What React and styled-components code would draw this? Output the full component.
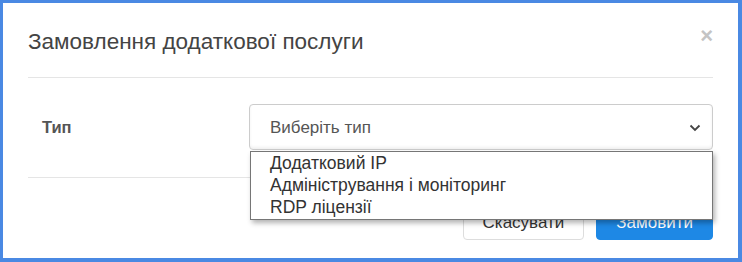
import React from "react"
import styled, { createGlobalStyle } from "styled-components"

const GlobalStyle = createGlobalStyle`
  html, body {
    margin: 0;
    padding: 0;
    background: #ffffff;
  }
  body {
    font-family: "Liberation Sans", Arial, sans-serif;
  }
`

const options = ["Додатковий IP", "Адміністрування і моніторинг", "RDP ліцензії"]

function App() {
  return (
    <>
      <GlobalStyle />
      <Frame>
        <Header>
          <Title>Замовлення додаткової послуги</Title>
          <Close aria-label="close">×</Close>
        </Header>
        <Body>
          <Label>Тип</Label>
          <SelectWrap>
            <Select>
              <span>Виберіть тип</span>
              <svg width="12" height="8" viewBox="0 0 12 8">
                <path d="M1.5 1.5 L6 6 L10.5 1.5" fill="none" stroke="#444" strokeWidth="1.8" />
              </svg>
            </Select>
            <Menu>
              {options.map(o => (
                <Option key={o}>{o}</Option>
              ))}
            </Menu>
          </SelectWrap>
        </Body>
        <Footer>
          <Button>Скасувати</Button>
          <Button primary>Замовити</Button>
        </Footer>
      </Frame>
    </>
  )
}

export default App

const Frame = styled.div`
  width: 742px;
  height: 262px;
  box-sizing: border-box;
  border-style: solid;
  border-color: #4a89e3;
  border-width: 3px 4px 4px 3px;
  padding: 0 25px;
  background: #fff;
  overflow: hidden;
`

const Header = styled.div`
  height: 75px;
  box-sizing: border-box;
  display: flex;
  align-items: center;
  justify-content: space-between;
  border-bottom: 1px solid #e5e5e5;
`

const Title = styled.h4`
  margin: 3px 0 0;
  font-size: 22.5px;
  font-weight: normal;
  color: #444;
`

const Close = styled.button`
  align-self: flex-start;
  margin-top: 22px;
  padding: 0;
  border: none;
  background: none;
  font-family: "Liberation Sans", Arial, sans-serif;
  font-size: 22px;
  font-weight: bold;
  line-height: 1;
  color: #c4c4c4;
`

const Body = styled.div`
  display: grid;
  grid-template-columns: 221px 1fr;
  align-items: center;
  padding: 26px 0 27px;
  border-bottom: 1px solid #e5e5e5;
`

const Label = styled.label`
  padding-left: 14px;
  font-size: 16.5px;
  font-weight: bold;
  color: #555;
`

const SelectWrap = styled.div`
  position: relative;
`

const Select = styled.div`
  height: 46px;
  box-sizing: border-box;
  display: flex;
  align-items: center;
  justify-content: space-between;
  padding: 2px 11px 0 20px;
  border: 1px solid #ccc;
  border-radius: 4px;
  box-shadow: inset 0 -2px 3px rgba(0, 0, 0, 0.06);
  font-size: 17px;
  color: #555;
`

const Menu = styled.ul`
  position: absolute;
  top: calc(100% + 1px);
  left: 1px;
  right: 0;
  margin: 0;
  padding: 0 0 1px;
  list-style: none;
  background: #fff;
  border: 1px solid #767676;
  box-shadow: 2px 3px 5px rgba(0, 0, 0, 0.3);
  z-index: 2;
`

const Option = styled.li`
  padding-left: 19px;
  font-size: 17.5px;
  line-height: 22px;
  color: #333;
`

const Footer = styled.div`
  display: flex;
  justify-content: flex-end;
  gap: 12px;
  padding-top: 27px;
`

const Button = styled.button`
  height: 35px;
  padding: 0 19px;
  border-radius: 4px;
  font-family: "Liberation Sans", Arial, sans-serif;
  font-size: 17px;
  border: 1px solid ${p => (p.primary ? "#1e88e5" : "#ddd")};
  background: ${p => (p.primary ? "#1e88e5" : "#fff")};
  color: ${p => (p.primary ? "#fff" : "#333")};
`
